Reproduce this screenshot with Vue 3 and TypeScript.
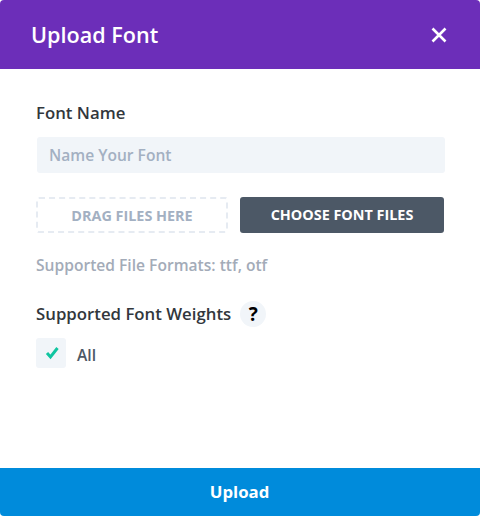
<script setup lang="ts">
const title = 'Upload Font'
</script>

<template>
  <div class="modal">
    <header class="head">
      <h1>{{ title }}</h1>
      <svg class="close" width="18" height="18" viewBox="0 0 18 18"><path d="M2.500 2.500L15.500 15.500M15.500 2.500L2.500 15.500" stroke="#fff" stroke-width="2.600" fill="none"/></svg>
    </header>
    <main class="body">
      <label class="label">Font Name</label>
      <div class="input">Name Your Font</div>
      <div class="files">
        <div class="drop">DRAG FILES HERE</div>
        <button class="choose">CHOOSE FONT FILES</button>
      </div>
      <p class="formats">Supported File Formats: ttf, otf</p>
      <div class="weights">
        <span class="label">Supported Font Weights</span>
        <span class="help">?</span>
      </div>
      <div class="check-row">
        <span class="box">
          <svg width="18" height="16" viewBox="0 0 18 16"><path d="M5 8L8.500 12L15.500 3" stroke="#10c5a0" stroke-width="3" fill="none"/></svg>
        </span>
        <span class="all">All</span>
      </div>
    </main>
    <button class="upload">Upload</button>
  </div>
</template>

<style>
html, body { margin: 0; background: #fff; }
</style>

<style scoped>
.modal {
  width: 480px;
  height: 516px;
  display: flex;
  flex-direction: column;
  background: #fff;
  font-family: "Open Sans", sans-serif;
  border-radius: 4px;
  overflow: hidden;
}
.head {
  height: 69px;
  flex: none;
  display: flex;
  align-items: center;
  justify-content: space-between;
  padding: 0 32px 0 31px;
  box-sizing: border-box;
  background: #6c2eb9;
}
.head h1 {
  margin: 0;
  font-size: 21.600px;
  font-weight: 600;
  color: #fff;
}
.close { display: block; }
.body {
  flex: 1;
  padding: 32px 36px 0;
  box-sizing: border-box;
}
.label {
  display: block;
  font-size: 16.800px;
  font-weight: 600;
  line-height: 24px;
  color: #32373c;
}
.input {
  margin: 12px 0 0 1px;
  width: 408px;
  height: 36px;
  padding-left: 12px;
  box-sizing: border-box;
  border-radius: 3px;
  background: #f1f5f9;
  color: #a3b0c2;
  font-size: 15.600px;
  font-weight: 600;
  line-height: 37px;
}
.files {
  display: flex;
  gap: 12px;
  margin-top: 24px;
}
.drop {
  width: 192px;
  height: 36px;
  box-sizing: border-box;
  border: 2px dashed #e6ebf2;
  border-radius: 3px;
  display: flex;
  align-items: center;
  justify-content: center;
  font-size: 14.400px;
  font-weight: 700;
  color: #a3b0c2;
}
.choose {
  width: 204px;
  height: 36px;
  border: 0;
  border-radius: 3px;
  background: #4c5866;
  color: #fff;
  font: 700 14.400px "Open Sans", sans-serif;
  padding: 0 0 2px;
}
.formats {
  margin: 21px 0 0;
  font-size: 15.600px;
  font-weight: 600;
  line-height: 22px;
  color: #a3abb8;
}
.weights {
  display: flex;
  align-items: center;
  gap: 9px;
  margin-top: 25px;
}
.help {
  width: 26px;
  height: 26px;
  border-radius: 50%;
  background: #f1f5f9;
  color: #000;
  display: flex;
  align-items: center;
  justify-content: center;
  font-size: 19px;
  font-weight: 700;
}
.check-row {
  display: flex;
  align-items: center;
  gap: 11px;
  margin-top: 11px;
}
.box {
  width: 30px;
  height: 30px;
  border-radius: 3px;
  background: #f1f5f9;
  display: flex;
  align-items: center;
  justify-content: center;
}
.all {
  font-size: 15.600px;
  font-weight: 600;
  color: #4c5866;
  padding-top: 4px;
}
.upload {
  flex: none;
  height: 48px;
  border: 0;
  background: #008bdb;
  color: #fff;
  font: 700 16.800px "Open Sans", sans-serif;
  padding: 0 1px 2px 0;
}
</style>
